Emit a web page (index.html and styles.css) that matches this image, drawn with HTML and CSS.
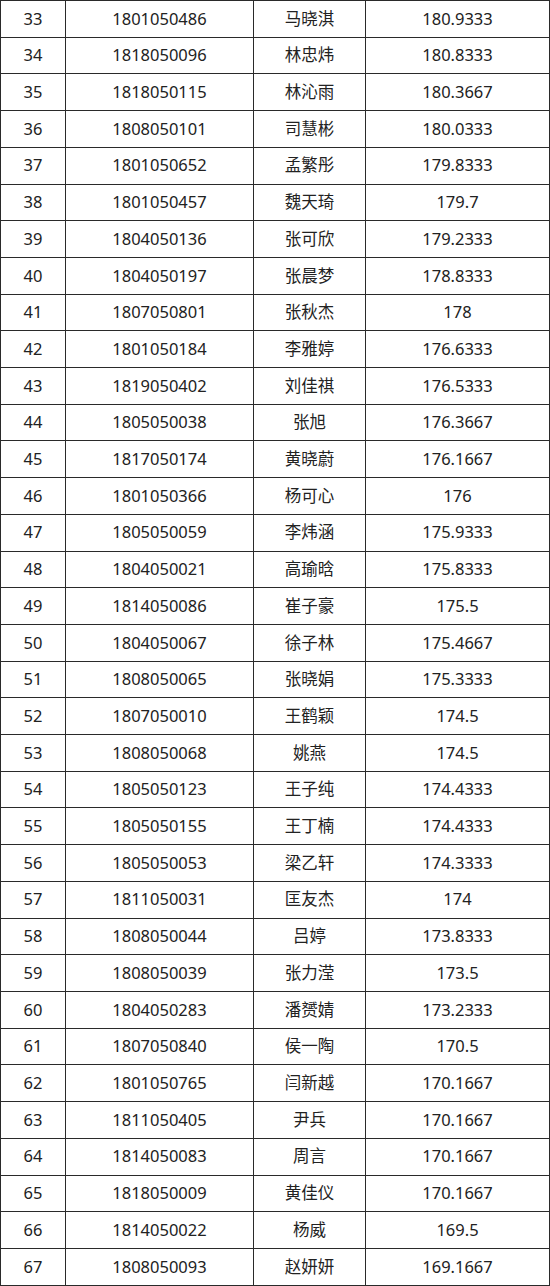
FILE: index.html
```html
<!DOCTYPE html>
<html lang="zh">
<head>
<meta charset="utf-8">
<link rel="stylesheet" href="styles.css">
</head>
<body>
<table class="score-table">
<colgroup>
<col class="c1"><col class="c2"><col class="c3"><col class="c4">
</colgroup>
<tbody>
<tr><td>33</td><td>1801050486</td><td>马晓淇</td><td>180.9333</td></tr>
<tr><td>34</td><td>1818050096</td><td>林忠炜</td><td>180.8333</td></tr>
<tr><td>35</td><td>1818050115</td><td>林沁雨</td><td>180.3667</td></tr>
<tr><td>36</td><td>1808050101</td><td>司慧彬</td><td>180.0333</td></tr>
<tr><td>37</td><td>1801050652</td><td>孟繁彤</td><td>179.8333</td></tr>
<tr><td>38</td><td>1801050457</td><td>魏天琦</td><td>179.7</td></tr>
<tr><td>39</td><td>1804050136</td><td>张可欣</td><td>179.2333</td></tr>
<tr><td>40</td><td>1804050197</td><td>张晨梦</td><td>178.8333</td></tr>
<tr><td>41</td><td>1807050801</td><td>张秋杰</td><td>178</td></tr>
<tr><td>42</td><td>1801050184</td><td>李雅婷</td><td>176.6333</td></tr>
<tr><td>43</td><td>1819050402</td><td>刘佳祺</td><td>176.5333</td></tr>
<tr><td>44</td><td>1805050038</td><td>张旭</td><td>176.3667</td></tr>
<tr><td>45</td><td>1817050174</td><td>黄晓蔚</td><td>176.1667</td></tr>
<tr><td>46</td><td>1801050366</td><td>杨可心</td><td>176</td></tr>
<tr><td>47</td><td>1805050059</td><td>李炜涵</td><td>175.9333</td></tr>
<tr><td>48</td><td>1804050021</td><td>高瑜晗</td><td>175.8333</td></tr>
<tr><td>49</td><td>1814050086</td><td>崔子豪</td><td>175.5</td></tr>
<tr><td>50</td><td>1804050067</td><td>徐子林</td><td>175.4667</td></tr>
<tr><td>51</td><td>1808050065</td><td>张晓娟</td><td>175.3333</td></tr>
<tr><td>52</td><td>1807050010</td><td>王鹤颖</td><td>174.5</td></tr>
<tr><td>53</td><td>1808050068</td><td>姚燕</td><td>174.5</td></tr>
<tr><td>54</td><td>1805050123</td><td>王子纯</td><td>174.4333</td></tr>
<tr><td>55</td><td>1805050155</td><td>王丁楠</td><td>174.4333</td></tr>
<tr><td>56</td><td>1805050053</td><td>梁乙轩</td><td>174.3333</td></tr>
<tr><td>57</td><td>1811050031</td><td>匡友杰</td><td>174</td></tr>
<tr><td>58</td><td>1808050044</td><td>吕婷</td><td>173.8333</td></tr>
<tr><td>59</td><td>1808050039</td><td>张力滢</td><td>173.5</td></tr>
<tr><td>60</td><td>1804050283</td><td>潘赟婧</td><td>173.2333</td></tr>
<tr><td>61</td><td>1807050840</td><td>侯一陶</td><td>170.5</td></tr>
<tr><td>62</td><td>1801050765</td><td>闫新越</td><td>170.1667</td></tr>
<tr><td>63</td><td>1811050405</td><td>尹兵</td><td>170.1667</td></tr>
<tr><td>64</td><td>1814050083</td><td>周言</td><td>170.1667</td></tr>
<tr><td>65</td><td>1818050009</td><td>黄佳仪</td><td>170.1667</td></tr>
<tr><td>66</td><td>1814050022</td><td>杨威</td><td>169.5</td></tr>
<tr><td>67</td><td>1808050093</td><td>赵妍妍</td><td>169.1667</td></tr>
</tbody>
</table>
</body>
</html>
```
FILE: styles.css
```css
html, body {
  margin: 0;
  padding: 0;
  background: #ffffff;
}
body {
  font-family: "Noto Sans", "Noto Sans CJK SC", sans-serif;
  color: #222222;
}
.score-table {
  border-collapse: collapse;
  table-layout: fixed;
  width: 549px;
}
.c1 { width: 65px; }
.c2 { width: 188px; }
.c3 { width: 112px; }
.c4 { width: 184px; }
.score-table tr {
  height: 36.71px;
}
.score-table td {
  border: 1.5px solid #2a2a2a;
  padding: 0;
  text-align: center;
  vertical-align: middle;
  font-size: 16.5px;
  line-height: 1;
}
```
